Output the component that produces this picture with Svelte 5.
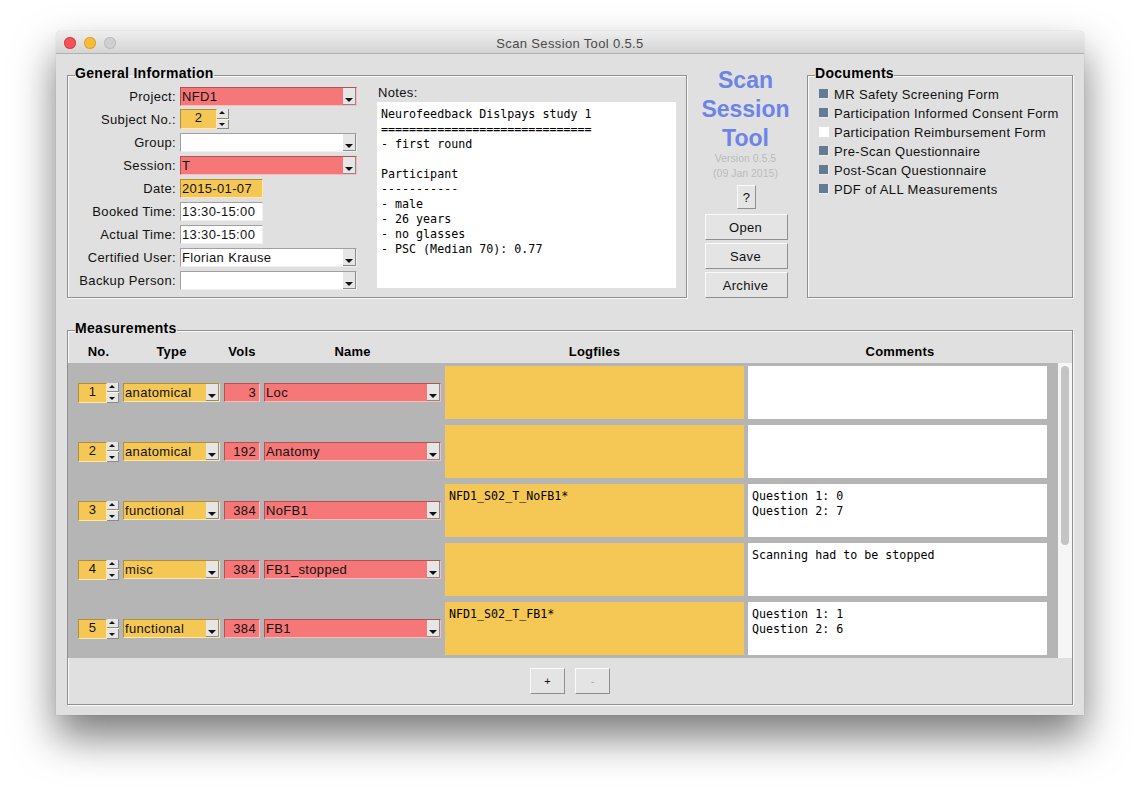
<script>
	const fields = [
		{ label: 'Project:', value: 'NFD1', kind: 'combo', tone: 'red' },
		{ label: 'Subject No.:', value: '2', kind: 'spin', tone: 'orange' },
		{ label: 'Group:', value: '', kind: 'combo', tone: 'white' },
		{ label: 'Session:', value: 'T', kind: 'combo', tone: 'red' },
		{ label: 'Date:', value: '2015-01-07', kind: 'entry', tone: 'orange' },
		{ label: 'Booked Time:', value: '13:30-15:00', kind: 'entry', tone: 'white' },
		{ label: 'Actual Time:', value: '13:30-15:00', kind: 'entry', tone: 'white' },
		{ label: 'Certified User:', value: 'Florian Krause', kind: 'combo', tone: 'white' },
		{ label: 'Backup Person:', value: '', kind: 'combo', tone: 'white' }
	];

	const notes = `Neurofeedback Dislpays study 1
==============================
- first round

Participant
-----------
- male
- 26 years
- no glasses
- PSC (Median 70): 0.77`;

	const documents = [
		{ name: 'MR Safety Screening Form', done: true },
		{ name: 'Participation Informed Consent Form', done: true },
		{ name: 'Participation Reimbursement Form', done: false },
		{ name: 'Pre-Scan Questionnaire', done: true },
		{ name: 'Post-Scan Questionnaire', done: true },
		{ name: 'PDF of ALL Measurements', done: true }
	];

	const measurements = [
		{ no: 1, type: 'anatomical', vols: 3, name: 'Loc', log: '', comment: '' },
		{ no: 2, type: 'anatomical', vols: 192, name: 'Anatomy', log: '', comment: '' },
		{ no: 3, type: 'functional', vols: 384, name: 'NoFB1', log: 'NFD1_S02_T_NoFB1*', comment: 'Question 1: 0\nQuestion 2: 7' },
		{ no: 4, type: 'misc', vols: 384, name: 'FB1_stopped', log: '', comment: 'Scanning had to be stopped' },
		{ no: 5, type: 'functional', vols: 384, name: 'FB1', log: 'NFD1_S02_T_FB1*', comment: 'Question 1: 1\nQuestion 2: 6' }
	];
</script>

{#snippet combo(value, tone)}
	<div class="field combo {tone}">
		<span class="value">{value}</span>
		<span class="drop"><i class="down"></i></span>
	</div>
{/snippet}

{#snippet spin(value)}
	<div class="spin">
		<div class="field orange spin-entry">{value}</div>
		<div class="spin-arrows">
			<span><i class="up"></i></span>
			<span><i class="down small"></i></span>
		</div>
	</div>
{/snippet}

<div class="page">
	<div class="window">
		<header class="titlebar">
			<div class="lights">
				<span class="light close"></span>
				<span class="light min"></span>
				<span class="light zoom"></span>
			</div>
			<span class="title">Scan Session Tool 0.5.5</span>
		</header>

		<main class="content">
			<div class="top">
				<fieldset class="frame general">
					<legend>General Information</legend>
					<div class="general-body">
						<div class="form">
							{#each fields as f}
								<div class="form-row">
									<span class="label">{f.label}</span>
									{#if f.kind === 'combo'}
										{@render combo(f.value, f.tone)}
									{:else if f.kind === 'spin'}
										{@render spin(f.value)}
									{:else}
										<div class="field entry {f.tone}">{f.value}</div>
									{/if}
								</div>
							{/each}
						</div>
						<div class="notes">
							<span class="notes-label">Notes:</span>
							<div class="mono notes-box">{notes}</div>
						</div>
					</div>
				</fieldset>

				<div class="brand">
					<div class="brand-name">Scan<br />Session<br />Tool</div>
					<div class="version">Version 0.5.5<br />(09 Jan 2015)</div>
					<button class="btn help">?</button>
					<div class="actions">
						<button class="btn">Open</button>
						<button class="btn">Save</button>
						<button class="btn">Archive</button>
					</div>
				</div>

				<fieldset class="frame docs">
					<legend>Documents</legend>
					<ul>
						{#each documents as d}
							<li><span class="check" class:done={d.done}></span>{d.name}</li>
						{/each}
					</ul>
				</fieldset>
			</div>

			<fieldset class="frame measurements">
				<legend>Measurements</legend>
				<div class="cols head">
					<span>No.</span>
					<span>Type</span>
					<span>Vols</span>
					<span>Name</span>
					<span>Logfiles</span>
					<span class="head-comments">Comments</span>
				</div>
				<div class="table">
					<div class="rows">
						{#each measurements as m}
							<div class="cols row">
								{@render spin(m.no)}
								{@render combo(m.type, 'orange')}
								<div class="field red vols">{m.vols}</div>
								{@render combo(m.name, 'red')}
								<div class="mono cell log">{m.log}</div>
								<div class="mono cell comment">{m.comment}</div>
							</div>
						{/each}
					</div>
					<div class="scrollbar"><div class="thumb"></div></div>
				</div>
				<div class="add-remove">
					<button class="btn small-btn">+</button>
					<button class="btn small-btn off">-</button>
				</div>
			</fieldset>
		</main>
	</div>
</div>

<style>
	:global(body) {
		background: #fff;
	}

	.page {
		box-sizing: border-box;
		height: 796px;
		padding: 31px 56px 0;
		overflow: hidden;
	}

	.window {
		box-sizing: border-box;
		width: 1028px;
		height: 684px;
		background: #e0e0e0;
		border-radius: 5px 5px 0 0;
		box-shadow: 0 22px 42px rgba(0, 0, 0, 0.52), 0 0 1px rgba(0, 0, 0, 0.3);
		font: 13px/19px 'Liberation Sans', Arial, sans-serif;
		letter-spacing: 0.35px;
		color: #111;
	}

	.titlebar {
		position: relative;
		box-sizing: border-box;
		height: 23px;
		padding-top: 2px;
		display: flex;
		align-items: center;
		justify-content: center;
		background: linear-gradient(#eeeeee, #d4d4d4);
		border-bottom: 1px solid #b0b0b0;
		border-radius: 5px 5px 0 0;
	}

	.title {
		color: #4a4a4a;
	}

	.lights {
		position: absolute;
		left: 8px;
		top: 6px;
		display: flex;
		gap: 8px;
	}

	.light {
		width: 12px;
		height: 12px;
		border-radius: 50%;
	}

	.close {
		background: #f4535a;
		box-shadow: inset 0 0 0 1px #dc4147;
	}

	.min {
		background: #f6bd3a;
		box-shadow: inset 0 0 0 1px #dca52c;
	}

	.zoom {
		background: #cfcfcf;
		box-shadow: inset 0 0 0 1px #bdbdbd;
	}

	.content {
		padding: 13px 11px 0;
	}

	.top {
		display: flex;
		height: 231px;
	}

	.frame {
		box-sizing: border-box;
		margin: 0;
		padding: 0;
		min-width: 0;
		border: 1px solid #8f8f8f;
		box-shadow: inset 1px 1px 0 #fafafa, 1px 1px 0 #fafafa;
	}

	.frame legend {
		box-sizing: border-box;
		height: 16px;
		margin-left: 7px;
		padding: 0;
		font-size: 14px;
		font-weight: 700;
		line-height: 13px;
		letter-spacing: 0.3px;
		color: #000;
	}

	.general {
		width: 620px;
	}

	.general-body {
		display: flex;
		padding: 4px 0 0 7px;
	}

	.form {
		display: flex;
		flex-direction: column;
		gap: 4px;
		width: 282px;
	}

	.form-row {
		display: flex;
		gap: 4px;
		height: 19px;
	}

	.label {
		width: 101px;
		white-space: nowrap;
		display: flex;
		justify-content: flex-end;
	}

	.field {
		box-sizing: border-box;
		height: 19px;
		padding: 0 1px;
		line-height: 17px;
		border: 1px solid;
		white-space: nowrap;
	}

	.red {
		background: #f67777;
		border-color: #b25252 #fbb #fbb #b25252;
	}

	.orange {
		background: #f5c755;
		border-color: #b08e3b #ffe9a8 #ffe9a8 #b08e3b;
	}

	.white {
		background: #fff;
		border-color: #a0a0a0 #f0f0f0 #f0f0f0 #a0a0a0;
	}

	.combo {
		position: relative;
		width: 177px;
		padding-right: 16px;
	}

	.drop {
		position: absolute;
		right: 0;
		top: 0;
		bottom: 0;
		width: 13px;
		background: #e6e6e6;
		border-right: 1px solid #8a8a8a;
		border-bottom: 1px solid #8a8a8a;
		box-sizing: border-box;
	}

	.down,
	.up {
		position: absolute;
		left: 2px;
		width: 0;
		height: 0;
		border-left: 4px solid transparent;
		border-right: 4px solid transparent;
	}

	.down {
		bottom: 2px;
		border-top: 4px solid #111;
	}

	.up {
		top: 2px;
		border-bottom: 4px solid #111;
	}

	.down.small {
		bottom: 2px;
		border-top-width: 3px;
		border-left-width: 3px;
		border-right-width: 3px;
	}

	.entry {
		width: 83px;
	}

	.spin {
		display: flex;
		width: 41px;
		height: 20px;
	}

	.spin-entry {
		width: 29px;
		height: 20px;
		line-height: 15px;
		text-align: center;
		padding-right: 1px;
	}

	.form-row .spin {
		width: 49px;
		margin-top: -1px;
	}

	.form-row .spin-entry {
		width: 37px;
	}

	.spin-arrows {
		width: 12px;
		display: flex;
		flex-direction: column;
		background: #fff6d8;
		gap: 1px;
	}

	.spin-arrows span {
		position: relative;
		flex: 1;
		background: #e6e6e6;
		border-right: 1px solid #8a8a8a;
		border-bottom: 1px solid #8a8a8a;
		box-sizing: border-box;
	}

	.spin-arrows .up {
		top: 2px;
		left: 2px;
		border-left-width: 3px;
		border-right-width: 3px;
		border-bottom-width: 3px;
	}

	.notes {
		display: flex;
		flex-direction: column;
		margin-left: 20px;
		margin-top: -3px;
		width: 299px;
	}

	.notes-label {
		line-height: 18px;
		padding-left: 1px;
	}

	.mono {
		font-family: 'DejaVu Sans Mono', monospace;
		font-size: 11.66px;
		line-height: 15px;
		letter-spacing: 0;
		white-space: pre;
		color: #000;
	}

	.notes-box {
		height: 186px;
		box-sizing: border-box;
		background: #fff;
		padding: 5px 4px;
	}

	.brand {
		width: 119px;
		display: flex;
		flex-direction: column;
		align-items: center;
		margin-top: -1px;
	}

	.brand-name {
		margin-left: -2px;
		font-size: 23px;
		font-weight: 700;
		line-height: 29px;
		letter-spacing: 0;
		text-align: center;
		color: #6c84ea;
	}

	.version {
		margin-top: -2px;
		margin-left: -2px;
		font-size: 10.5px;
		line-height: 15px;
		letter-spacing: 0;
		text-align: center;
		color: #bcbcbc;
	}

	.btn {
		box-sizing: border-box;
		width: 83px;
		height: 26px;
		padding: 0;
		background: #e4e4e4;
		border: 1px solid;
		border-color: #fafafa #8f8f8f #8f8f8f #fafafa;
		font: inherit;
		letter-spacing: 0.3px;
		color: #111;
	}

	.actions .btn {
		padding-right: 2px;
	}

	.help {
		width: 19px;
		height: 25px;
		margin-top: 4px;
	}

	.actions {
		display: flex;
		flex-direction: column;
		gap: 3px;
		margin-top: 5px;
	}

	.docs {
		width: 266px;
		margin-left: 1px;
	}

	.docs ul {
		list-style: none;
		margin: 0;
		padding: 2px 0 0 11px;
	}

	.docs li {
		display: flex;
		align-items: center;
		gap: 5px;
		height: 19px;
		white-space: nowrap;
	}

	.check {
		width: 10px;
		height: 10px;
		background: #fff;
		margin-top: -2px;
	}

	.check.done {
		background: #647b94;
		box-shadow: inset -1px -1px 0 #e9edf1;
	}

	.measurements {
		height: 383px;
		margin-top: 24px;
	}

	.cols {
		display: grid;
		grid-template-columns: 41px 97px 36px 177px 299px 299px;
		gap: 4px;
		padding-left: 10px;
	}

	.head {
		box-sizing: border-box;
		height: 25px;
		padding-top: 1px;
		align-items: center;
		font-weight: 700;
		font-size: 13px;
		letter-spacing: 0.2px;
		text-align: center;
		color: #000;
	}

	.head-comments {
		padding-left: 5px;
	}

	.table {
		display: flex;
		height: 295px;
		background: #b5b5b5;
	}

	.rows {
		flex: 1;
		display: flex;
		flex-direction: column;
		gap: 6px;
		padding-top: 3px;
		overflow: hidden;
	}

	.row {
		height: 53px;
		align-items: center;
	}

	.row .combo {
		width: 100%;
	}

	.vols {
		text-align: right;
		padding-right: 3px;
	}

	.cell {
		align-self: stretch;
		box-sizing: border-box;
		padding: 5px 4px;
	}

	.log {
		background: #f5c755;
	}

	.comment {
		background: #fff;
	}

	.scrollbar {
		box-sizing: border-box;
		width: 14px;
		background: #f6f6f6;
		padding: 3px 3px 0;
	}

	.thumb {
		width: 8px;
		height: 179px;
		border-radius: 4px;
		background: #c4c4c4;
	}

	.add-remove {
		display: flex;
		justify-content: center;
		gap: 10px;
		margin-top: 10px;
	}

	.small-btn {
		width: 35px;
		font-size: 11px;
		letter-spacing: 0;
	}

	.off {
		color: #a8a8a8;
	}
</style>
